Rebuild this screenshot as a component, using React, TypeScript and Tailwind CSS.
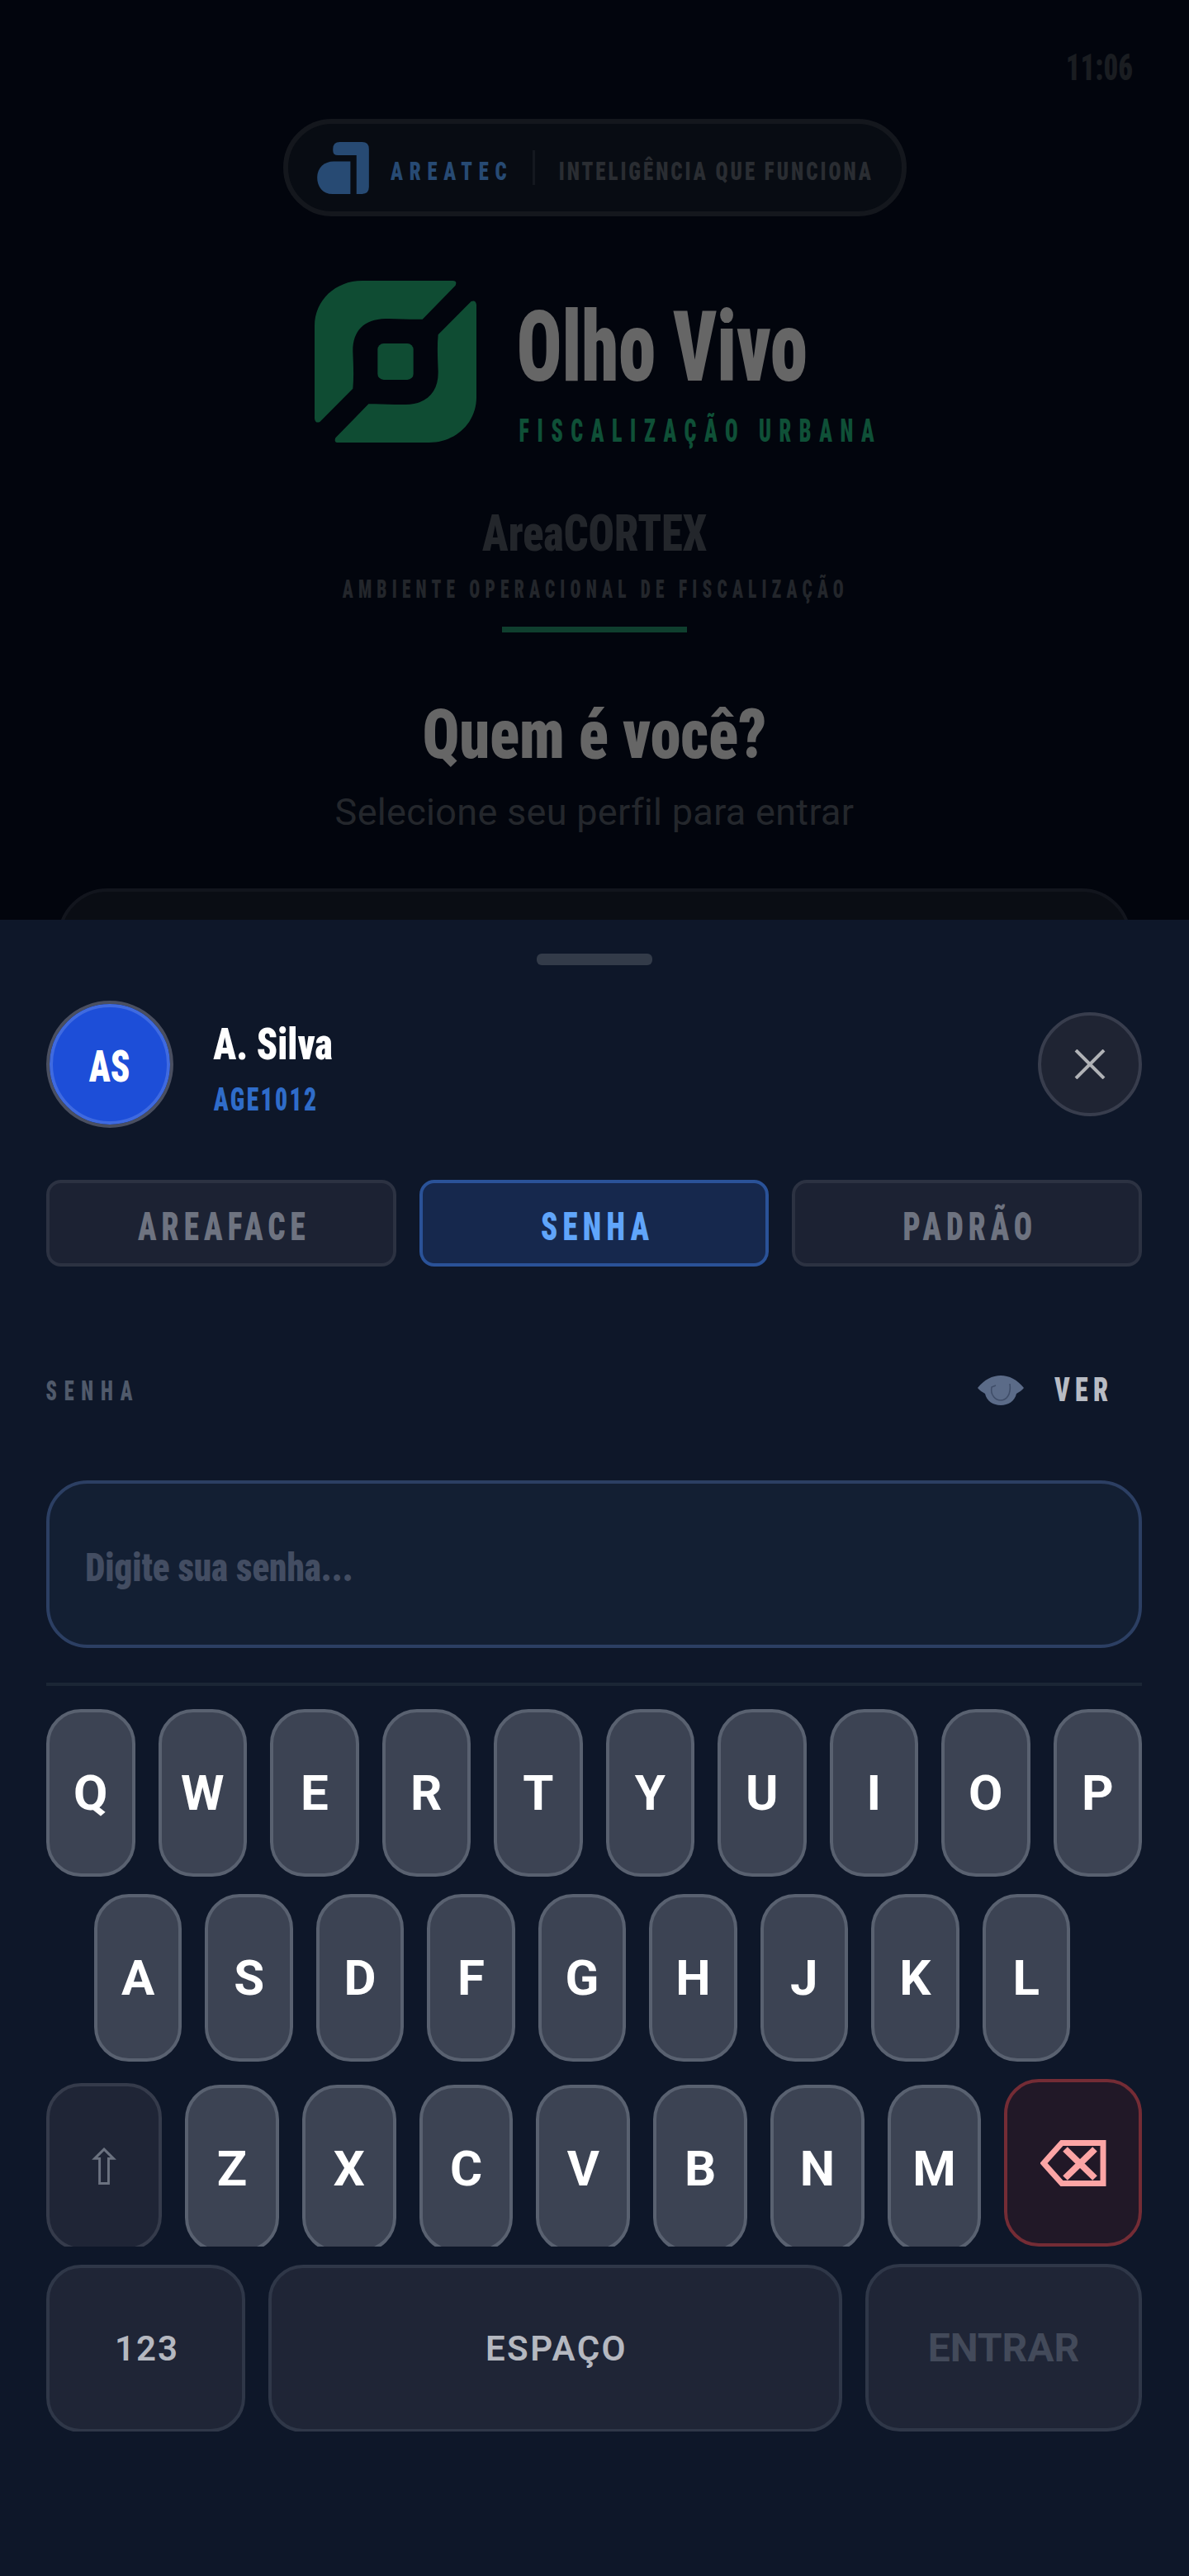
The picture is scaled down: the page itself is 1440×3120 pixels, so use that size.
import React from 'react';

const rowOne = ['Q', 'W', 'E', 'R', 'T', 'Y', 'U', 'I', 'O', 'P'];
const rowTwo = ['A', 'S', 'D', 'F', 'G', 'H', 'J', 'K', 'L'];
const rowThree = ['Z', 'X', 'C', 'V', 'B', 'N', 'M'];

// texto condensado: a caixa tem a largura final, o texto é comprimido no centro dela
const Cond = ({ box, text, children }: { box: string; text: string; children: React.ReactNode }) => (
  <span className={`flex justify-center shrink-0 ${box}`}>
    <span className={`shrink-0 whitespace-nowrap leading-none font-black [font-stretch:75%] font-['Roboto',sans-serif] ${text}`}>{children}</span>
  </span>
);

const AreatecMark = () => (
  <svg width="63" height="63" viewBox="130 97 187 188" fill="#274a73">
    <path d="M250 167V285H185C150 285 130 258 130 225C130 190 155 167 190 167Z" />
    <path d="M187 122Q187 97 212 97H292Q317 97 317 122V260Q317 285 292 285H272V145H205Q187 145 187 128Z" />
  </svg>
);

const OlhoMark = () => (
  <svg width="196" height="196" viewBox="33 30 588 588" fill="#0f4c33" className="shrink-0">
    <path d="M205 30H535Q552 30 545 47L425 170C380 172 340 167 290 168C210 170 170 215 172 290C174 340 176 380 172 422L52 543Q35 550 33 530V195C33 100 110 30 205 30Z" />
    <path d="M205 30H535Q552 30 545 47L425 170C380 172 340 167 290 168C210 170 170 215 172 290C174 340 176 380 172 422L52 543Q35 550 33 530V195C33 100 110 30 205 30Z" transform="rotate(180 327 324)" />
    <rect x="262" y="258" width="130" height="132" rx="22" />
  </svg>
);

const EyeIcon = () => (
  <svg width="56" height="36" viewBox="0 0 56 36">
    <path fill="#5b6b88" d="M0 15C8 5 18 0 28 0C38 0 48 5 56 15C54 18 50 20 47 22C45 31 37 36 28 36C19 36 11 31 9 22C6 20 2 18 0 15Z" />
    <path fill="none" stroke="#3f4d68" strokeWidth="1.5" d="M22 12L17 14C15 24 22 30 28 30C34 30 41 24 39 10" />
  </svg>
);

const BackspaceIcon = () => (
  <svg width="80" height="56" viewBox="0 0 80 56" fill="none" stroke="#fca5a5">
    <path strokeWidth="7" d="M4 28L26 3.5H76V52.5H26Z" />
    <path strokeWidth="8" d="M30 11L66 46M66 11L30 46" />
  </svg>
);

const LetterKey = ({ label, inset }: { label: string; inset?: boolean }) => (
  <div
    className={`flex-1 h-[203px] flex items-center justify-center rounded-[42px] border-4 border-[#596170] bg-[#3c4353] text-white text-[60px] font-bold leading-none ${
      inset ? 'mt-[7px]' : ''
    }`}
  >
    {label}
  </div>
);

export default function App() {
  return (
    <div className="relative w-[1440px] h-[3120px] overflow-hidden bg-[#02050d] font-['Roboto',sans-serif]">
      {/* Tela de fundo */}
      <div className="flex flex-col items-center">
        <div className="w-full h-[104px] pt-[60px] pr-[68px] flex justify-end">
          <Cond box="w-[82px]" text="text-[44px] scale-x-[.79] text-[#1a1d21]">11:06</Cond>
        </div>

        <div className="mt-[40px] w-[755px] h-[118px] flex items-center pl-[35px] rounded-full border-[6px] border-[#14171d] bg-[#080c13]">
          <AreatecMark />
          <div className="pt-[7px] ml-[31px]">
            <Cond box="w-[139px]" text="text-[32px] tracking-[10px] scale-x-[.77] text-[#274a73]">AREATEC</Cond>
          </div>
          <div className="ml-[28px] w-[3px] h-[42px] bg-[#14181f]" />
          <div className="pt-[7px] ml-[30px]">
            <Cond box="w-[380px]" text="text-[32px] tracking-[3.8px] scale-x-[.78] text-[#2a2d32]">INTELIGÊNCIA QUE FUNCIONA</Cond>
          </div>
        </div>

        <div className="mt-[78px] w-[678px] h-[196px] flex gap-[50px]">
          <OlhoMark />
          <div className="flex flex-col">
            <div className="mt-[22px] ml-[2px]">
              <Cond box="w-[345px]" text="text-[118px] scale-x-[.77] text-[#666666]">Olho Vivo</Cond>
            </div>
            <div className="mt-[23px] ml-[5px]">
              <Cond box="w-[432px]" text="text-[38px] tracking-[14px] scale-x-[.684] text-[#0f5037]">FISCALIZAÇÃO URBANA</Cond>
            </div>
          </div>
        </div>

        <div className="mt-[80px]">
          <Cond box="w-[271px]" text="text-[61px] scale-x-[.855] text-[#23262b]">AreaCORTEX</Cond>
        </div>
        <div className="mt-[21px] ml-[3px]">
          <Cond box="w-[603px]" text="text-[31px] tracking-[9px] scale-x-[.69] text-[#23262b]">AMBIENTE OPERACIONAL DE FISCALIZAÇÃO</Cond>
        </div>
        <div className="mt-[30px] w-[224px] h-[7px] bg-[#0f3f2e]" />
        <div className="mt-[82px]">
          <Cond box="w-[413px]" text="text-[83px] scale-x-[.895] text-[#666666]">Quem é você?</Cond>
        </div>
        <div className="mt-[30px] text-[45px] leading-none tracking-[.3px] text-[#24272c]">Selecione seu perfil para entrar</div>

        <div className="mt-[70px] w-[1300px] h-[200px] rounded-t-[60px] border-4 border-[#12151d] bg-[#0a0d14]" />
      </div>

      {/* Bottom sheet */}
      <div className="absolute inset-x-0 top-[1114px] bottom-0 pl-[56px] pr-[57px] bg-[#0e1729]">
        <div className="mt-[41px] mx-auto w-[140px] h-[14px] rounded-[6px] bg-[#333b49]" />

        <div className="mt-[43px] h-[154px] flex items-center">
          <div className="w-[154px] h-[154px] rounded-full border-4 border-[#4a4f60]">
            <div className="w-full h-full pt-[7px] rounded-full border-4 border-[#3f6ae0] bg-[#1d4ed8] flex items-center justify-center">
              <Cond box="w-[46px]" text="text-[53px] scale-x-[.81] text-white">AS</Cond>
            </div>
          </div>
          <div className="ml-[49px] self-start mt-[26px] flex flex-col">
            <Cond box="w-[143px]" text="text-[54px] scale-x-[.855] text-white">A. Silva</Cond>
            <div className="mt-[21px] ml-[2px]">
              <Cond box="w-[123px]" text="text-[38px] tracking-[3px] scale-x-[.78] text-[#2f6cc9]">AGE1012</Cond>
            </div>
          </div>
          <button className="ml-auto w-[126px] h-[126px] rounded-full border-4 border-[#383d4d] bg-[#1f2433] flex items-center justify-center">
            <svg width="38" height="36" viewBox="0 0 38 36" stroke="#b0b2b6" strokeWidth="4">
              <path d="M2 1L36 35M36 1L2 35" />
            </svg>
          </button>
        </div>

        <div className="mt-[63px] grid grid-cols-3 gap-[28px]">
          <div className="h-[105px] pt-[7px] pl-[8px] flex items-center justify-center rounded-[18px] border-4 border-[#2c3242] bg-[#1c2233]">
            <Cond box="w-[203px]" text="text-[49px] tracking-[8px] scale-x-[.76] text-[#6e7380]">AREAFACE</Cond>
          </div>
          <div className="h-[105px] pt-[7px] pl-[8px] flex items-center justify-center rounded-[18px] border-4 border-[#2a5298] bg-[#16284d]">
            <Cond box="w-[131px]" text="text-[49px] tracking-[8.5px] scale-x-[.75] text-[#60a5fa]">SENHA</Cond>
          </div>
          <div className="h-[105px] pt-[7px] pl-[8px] flex items-center justify-center rounded-[18px] border-4 border-[#2c3242] bg-[#1c2233]">
            <Cond box="w-[156px]" text="text-[49px] tracking-[8px] scale-x-[.755] text-[#6e7380]">PADRÃO</Cond>
          </div>
        </div>

        <div className="mt-[106px] h-[88px] flex items-center justify-between">
          <div className="ml-[5px]">
            <Cond box="w-[103px]" text="text-[33px] tracking-[12px] scale-x-[.735] text-[#505a6b]">SENHA</Cond>
          </div>
          <div className="flex items-center gap-[39px] pr-[37px]">
            <EyeIcon />
            <Cond box="w-[67px]" text="text-[40px] tracking-[8px] scale-x-[.8] text-[#b8bcc4]">VER</Cond>
          </div>
        </div>

        <div className="mt-[65px] h-[203px] pt-[7px] flex items-center pl-[46px] rounded-[50px] border-4 border-[#2c3f63] bg-[#131f33]">
          <Cond box="w-[318px]" text="text-[49px] scale-x-[.875] text-[#434d62]">Digite sua senha...</Cond>
        </div>
        <div className="mt-[42px] h-[4px] bg-[#1b2635]" />

        {/* Teclado */}
        <div className="mt-[28px] flex gap-[28px] h-[202px]">
          {rowOne.map((k) => (
            <LetterKey key={k} label={k} />
          ))}
        </div>
        <div className="mt-[22px] flex gap-[28px] pl-[58px] pr-[87px]">
          {rowTwo.map((k) => (
            <LetterKey key={k} label={k} />
          ))}
        </div>
        <div className="mt-[21px] h-[203px] overflow-hidden flex gap-[28px]">
          <div className="mt-[5px] flex-[1.25] h-[203px] flex items-center justify-center rounded-[42px] border-4 border-[#353b4b] bg-[#1f2536] text-[60px] leading-none text-[#6b7280] font-['DejaVu_Sans',sans-serif]">
            ⇧
          </div>
          {rowThree.map((k) => (
            <LetterKey key={k} label={k} inset />
          ))}
          <div className="flex-[1.5] h-[203px] flex items-center justify-center rounded-[42px] border-4 border-[#742c35] bg-[#211827]">
            <BackspaceIcon />
          </div>
        </div>
        <div className="mt-[21px] h-[203px] overflow-hidden flex gap-[28px]">
          <div className="mt-px w-[241px] h-[203px] pl-[3px] flex items-center justify-center rounded-[42px] border-4 border-[#2f3748] bg-[#1f2536] text-[42px] leading-none font-semibold tracking-[2px] text-[#b5b8c0]">
            123
          </div>
          <div className="mt-px w-[695px] h-[203px] pl-[3px] flex items-center justify-center rounded-[42px] border-4 border-[#2f3748] bg-[#1f2536] text-[42px] leading-none font-semibold tracking-[2.5px] text-[#b5b8c0]">
            ESPAÇO
          </div>
          <div className="flex-1 h-[203px] flex items-center justify-center rounded-[42px] border-4 border-[#2f3748] bg-[#1f2536] text-[48px] leading-none font-bold text-[#434a5a]">
            ENTRAR
          </div>
        </div>
      </div>
    </div>
  );
}
